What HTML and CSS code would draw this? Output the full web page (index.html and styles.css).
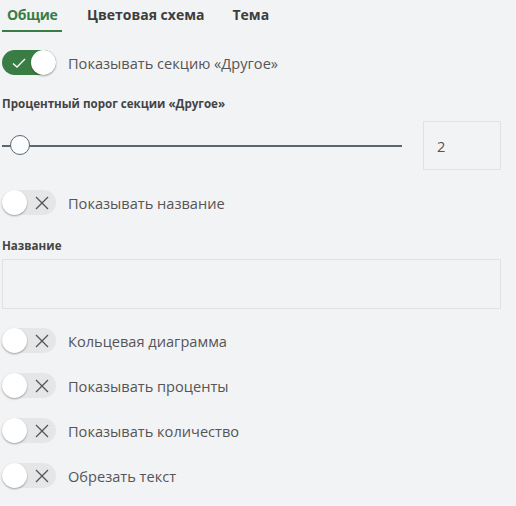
FILE: index.html
```html
<!DOCTYPE html>
<html lang="ru">
<head>
<meta charset="utf-8">
<link rel="stylesheet" href="styles.css">
</head>
<body>
<div class="pane">
  <nav class="tabs">
    <div class="tab active">Общие</div>
    <div class="tab second">Цветовая схема</div>
    <div class="tab third">Тема</div>
  </nav>

  <div class="row toggle-row first">
    <span class="toggle on">
      <svg class="ico check" viewBox="0 0 16 16" width="16" height="16"><path d="M2 8.5 L6 12 L14 4" fill="none" stroke="#fff" stroke-width="1.3"/></svg>
      <span class="knob"></span>
    </span>
    <span class="label">Показывать секцию «Другое»</span>
  </div>

  <div class="field-title t1">Процентный порог секции «Другое»</div>
  <div class="slider-row">
    <div class="slider"><span class="thumb"></span></div>
    <div class="numbox">2</div>
  </div>

  <div class="row toggle-row t2">
    <span class="toggle off">
      <span class="knob"></span>
      <svg class="ico cross" viewBox="0 0 16 16" width="16" height="16"><path d="M2 2 L14 14 M14 2 L2 14" fill="none" stroke="#555" stroke-width="1.3"/></svg>
    </span>
    <span class="label">Показывать название</span>
  </div>

  <div class="field-title t3">Название</div>
  <div class="textbox"></div>

  <div class="row toggle-row t4">
    <span class="toggle off">
      <span class="knob"></span>
      <svg class="ico cross" viewBox="0 0 16 16" width="16" height="16"><path d="M2 2 L14 14 M14 2 L2 14" fill="none" stroke="#555" stroke-width="1.3"/></svg>
    </span>
    <span class="label">Кольцевая диаграмма</span>
  </div>
  <div class="row toggle-row tn">
    <span class="toggle off">
      <span class="knob"></span>
      <svg class="ico cross" viewBox="0 0 16 16" width="16" height="16"><path d="M2 2 L14 14 M14 2 L2 14" fill="none" stroke="#555" stroke-width="1.3"/></svg>
    </span>
    <span class="label">Показывать проценты</span>
  </div>
  <div class="row toggle-row tn">
    <span class="toggle off">
      <span class="knob"></span>
      <svg class="ico cross" viewBox="0 0 16 16" width="16" height="16"><path d="M2 2 L14 14 M14 2 L2 14" fill="none" stroke="#555" stroke-width="1.3"/></svg>
    </span>
    <span class="label">Показывать количество</span>
  </div>
  <div class="row toggle-row tn">
    <span class="toggle off">
      <span class="knob"></span>
      <svg class="ico cross" viewBox="0 0 16 16" width="16" height="16"><path d="M2 2 L14 14 M14 2 L2 14" fill="none" stroke="#555" stroke-width="1.3"/></svg>
    </span>
    <span class="label">Обрезать текст</span>
  </div>
</div>
</body>
</html>
```

FILE: styles.css
```css
html, body {
  margin: 0;
  padding: 0;
  background: #f2f3f5;
  width: 516px;
  height: 506px;
  overflow: hidden;
}
.pane {
  font-family: "Open Sans", "Noto Sans", sans-serif;
  color: #4a4a4a;
  padding: 0 15px 0 2px;
}
.tabs {
  display: flex;
  height: 32px;
  align-items: stretch;
}
.tab {
  font-size: 14px;
  font-weight: 700;
  color: #3d3d3d;
  padding-top: 5px;
  box-sizing: border-box;
}
.tab.active {
  color: #3a7d44;
  border-bottom: 2px solid #3a7d44;
  width: 60px;
  padding-left: 5px;
  letter-spacing: -0.3px;
}
.tab.second { margin-left: 25px; }
.tab.third { margin-left: 28px; }
.row {
  display: flex;
  align-items: center;
}
.toggle {
  width: 54px;
  height: 25px;
  border-radius: 13px;
  display: flex;
  align-items: center;
  box-sizing: border-box;
  flex: none;
  position: relative;
}
.toggle.on {
  background: #3a7d44;
  justify-content: space-between;
  padding-left: 9px;
}
.toggle.off {
  background: #e4e6e8;
}
.knob {
  width: 25px;
  height: 25px;
  border-radius: 50%;
  background: #fff;
  box-shadow: 0 1px 2px rgba(0,0,0,0.35);
  box-sizing: border-box;
}
.toggle.off .cross {
  margin-left: 7px;
}
.label {
  margin-left: 12px;
  font-size: 14.6px;
  color: #555;
}
.first { margin-top: 18px; }
.field-title {
  font-size: 11.6px;
  font-weight: 700;
  color: #444;
}
.t1 { margin-top: 21px; }
.slider-row {
  display: flex;
  align-items: center;
  margin-top: 10px;
}
.slider {
  width: 400px;
  height: 2px;
  background: #5b6670;
  position: relative;
  flex: none;
}
.thumb {
  position: absolute;
  left: 8px;
  top: -10px;
  width: 20px;
  height: 20px;
  border-radius: 50%;
  background: #fbfcfd;
  border: 1px solid #5b6670;
  box-sizing: border-box;
}
.numbox {
  margin-left: 21px;
  width: 79px;
  height: 49px;
  border: 1px solid #e0e2e5;
  box-sizing: border-box;
  font-size: 14.6px;
  color: #555;
  display: flex;
  align-items: center;
  padding-left: 13px;
}
.t2 { margin-top: 20px; }
.t3 { margin-top: 23px; }
.textbox {
  margin-top: 6px;
  width: 499px;
  height: 50px;
  border: 1px solid #e0e2e5;
  box-sizing: border-box;
}
.t4 { margin-top: 19px; }
.tn { margin-top: 20px; }
```
